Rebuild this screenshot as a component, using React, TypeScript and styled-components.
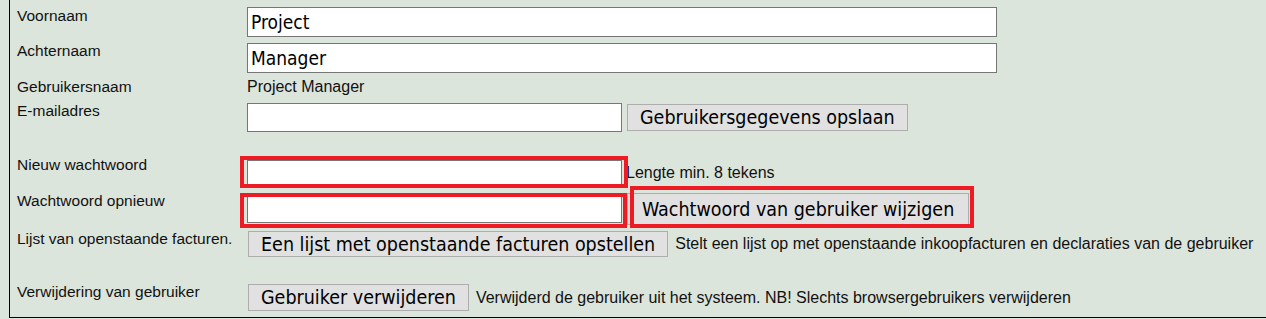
import * as React from 'react';
import styled, { createGlobalStyle } from 'styled-components';

const GlobalStyle = createGlobalStyle`
  html, body {
    margin: 0;
    padding: 0;
    background: #dce5dc;
  }

  body {
    font-family: 'Liberation Sans', Arial, sans-serif;
    color: #111;
  }
`;

const Panel = styled.div`
  margin-left: 9px;
  border-left: 1px solid #000;
  border-bottom: 1px solid #000;
  padding-top: 7px;
`;

const Row = styled.div<{ $h: number }>`
  display: grid;
  grid-template-columns: 237px 1fr;
  align-items: start;
  height: ${p => p.$h}px;
`;

const Label = styled.div`
  padding-left: 7px;
  font-size: 15.5px;
  line-height: 18px;
  white-space: nowrap;
`;

const Value = styled.div`
  font-size: 16px;
  line-height: 18px;
`;

const Controls = styled.div<{ $top?: number; $indent?: number; $gap?: number }>`
  display: flex;
  align-items: center;
  gap: ${p => p.$gap ?? 5}px;
  padding-top: ${p => p.$top ?? 0}px;
  padding-left: ${p => p.$indent ?? 0}px;
`;

const TextInput = styled.input<{ $w: number; $h: number }>`
  box-sizing: border-box;
  width: ${p => p.$w}px;
  height: ${p => p.$h}px;
  margin: 0;
  padding: 0 3px;
  border: 1px solid #767676;
  background: #fff;
  color: #000;
  font-family: 'DejaVu Sans Condensed', 'DejaVu Sans', sans-serif;
  font-size: 19px;
  outline: none;
`;

const Button = styled.button<{ $h: number; $pad?: number }>`
  box-sizing: border-box;
  height: ${p => p.$h}px;
  margin: 0;
  padding: 0 ${p => p.$pad ?? 12}px;
  border: 1px solid #adadad;
  background: #e1e1e1;
  color: #000;
  font-family: 'DejaVu Sans Condensed', 'DejaVu Sans', sans-serif;
  font-size: 19.5px;
  white-space: nowrap;
`;

const Hint = styled.span`
  font-size: 16px;
  line-height: 18px;
  white-space: nowrap;
`;

// red annotation frame drawn over a control
const Marked = styled.span<{ $t: number; $r: number; $b: number; $l: number }>`
  position: relative;
  display: inline-flex;

  &::after {
    content: '';
    position: absolute;
    top: ${p => p.$t}px;
    right: ${p => p.$r}px;
    bottom: ${p => p.$b}px;
    left: ${p => p.$l}px;
    border: 4px solid #ed1c24;
    pointer-events: none;
  }
`;

const App = () => {
  return (
    <>
      <GlobalStyle />
      <Panel>
        <Row $h={35}>
          <Label>Voornaam</Label>
          <Controls>
            <TextInput $w={750} $h={30} defaultValue='Project' />
          </Controls>
        </Row>
        <Row $h={36}>
          <Label>Achternaam</Label>
          <Controls $top={1}>
            <TextInput $w={750} $h={30} defaultValue='Manager' />
          </Controls>
        </Row>
        <Row $h={24}>
          <Label>Gebruikersnaam</Label>
          <Value>Project Manager</Value>
        </Row>
        <Row $h={54}>
          <Label>E-mailadres</Label>
          <Controls $top={1}>
            <TextInput $w={375} $h={29} />
            <Button $h={27}>Gebruikersgegevens opslaan</Button>
          </Controls>
        </Row>
        <Row $h={36}>
          <Label>Nieuw wachtwoord</Label>
          <Controls $top={4} $gap={4}>
            <Marked $t={-4} $r={-6} $b={-2} $l={-7}>
              <TextInput type='password' $w={375} $h={26} />
            </Marked>
            <Hint>Lengte min. 8 tekens</Hint>
          </Controls>
        </Row>
        <Row $h={38}>
          <Label>Wachtwoord opnieuw</Label>
          <Controls $top={1}>
            <Marked $t={-2} $r={-5} $b={-5} $l={-7}>
              <TextInput type='password' $w={375} $h={28} />
            </Marked>
            <Marked $t={-7} $r={-5} $b={-3} $l={3}>
              <Button $h={32} $pad={14}>Wachtwoord van gebruiker wijzigen</Button>
            </Marked>
          </Controls>
        </Row>
        <Row $h={53}>
          <Label>Lijst van openstaande facturen.</Label>
          <Controls $top={1} $indent={1} $gap={7}>
            <Button $h={26}>Een lijst met openstaande facturen opstellen</Button>
            <Hint>Stelt een lijst op met openstaande inkoopfacturen en declaraties van de gebruiker</Hint>
          </Controls>
        </Row>
        <Row $h={34}>
          <Label>Verwijdering van gebruiker</Label>
          <Controls $top={1} $indent={1} $gap={7}>
            <Button $h={27}>Gebruiker verwijderen</Button>
            <Hint>Verwijderd de gebruiker uit het systeem. NB! Slechts browsergebruikers verwijderen</Hint>
          </Controls>
        </Row>
      </Panel>
    </>
  );
};

export default App;
